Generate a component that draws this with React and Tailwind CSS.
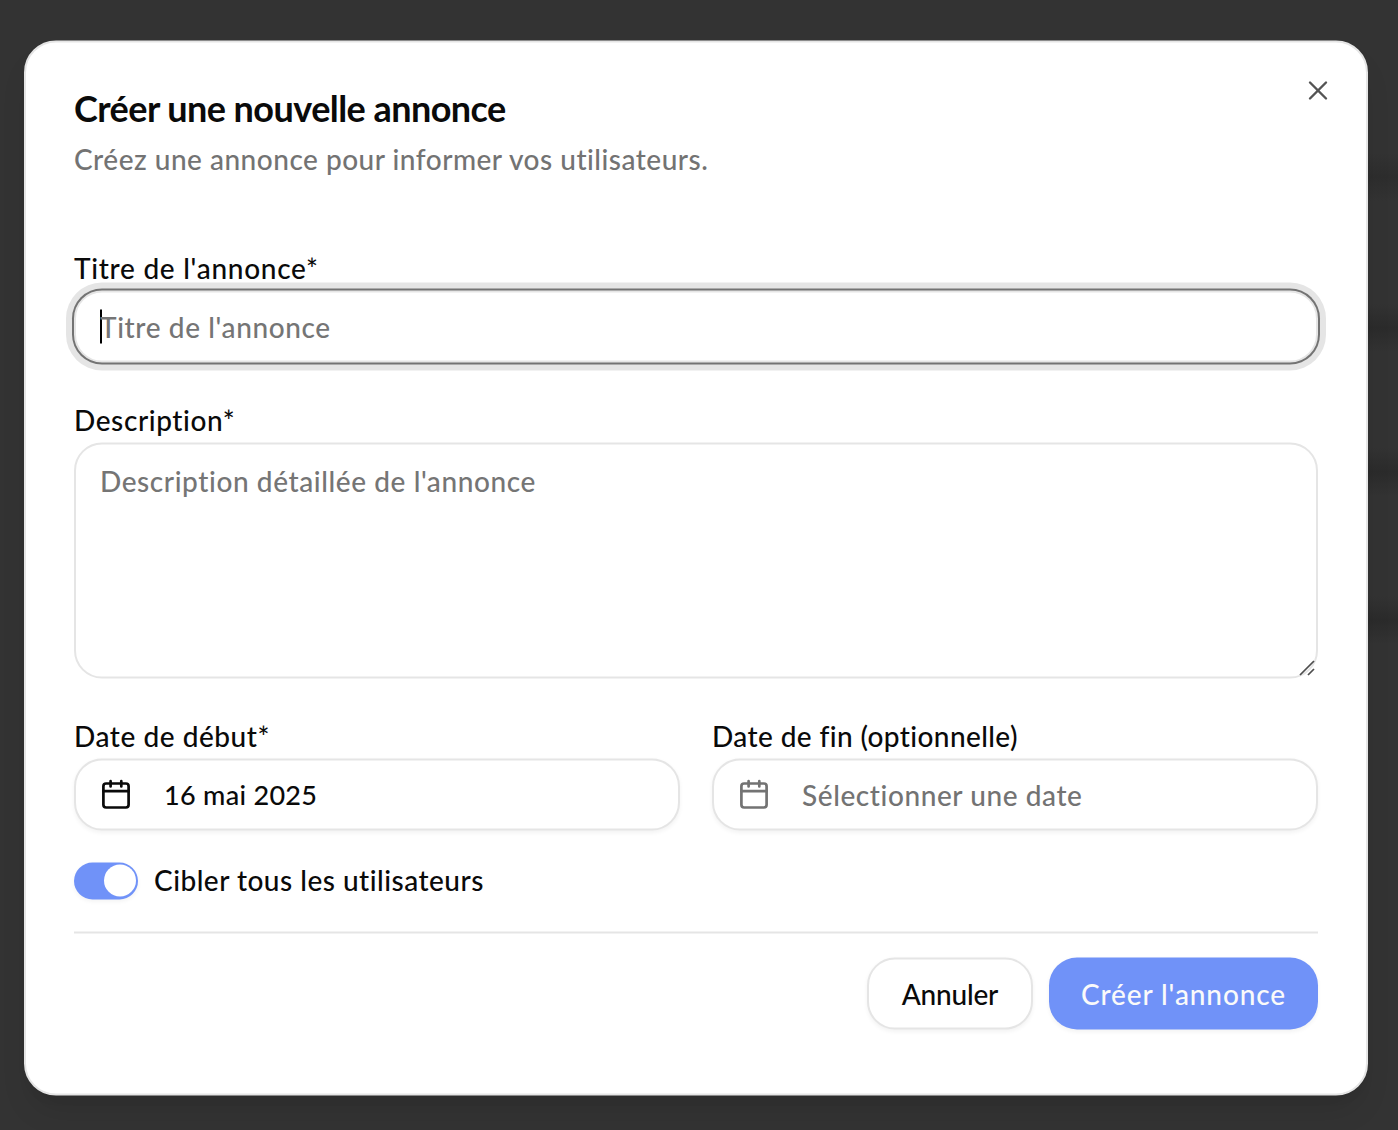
import { X } from "lucide-react";

function CalendarIcon({ className = "" }) {
  return (
    <svg
      viewBox="0 0 32 32"
      className={`size-8 shrink-0 ${className}`}
      fill="none"
      stroke="currentColor"
      strokeWidth="2.7"
      strokeLinecap="round"
      strokeLinejoin="round"
    >
      <rect x="3.4" y="5" width="25.2" height="24" rx="2.7" />
      <path d="M3.4 12.6h25.2M10.6 2.7v5.2M21.3 2.7v5.2" />
    </svg>
  );
}

function Label({ children, className }) {
  return <label className={`block h-7 whitespace-nowrap leading-[26px] ${className}`}>{children}</label>;
}

function DateButton({ children, className = "" }) {
  return (
    <button
      type="button"
      className={`mt-2 flex h-[72px] w-full items-center whitespace-nowrap rounded-[28px] border-2 border-[#e5e5e5] bg-white pl-6 text-left shadow-[0_2px_4px_rgba(0,0,0,0.05)] ${className}`}
    >
      {children}
    </button>
  );
}

function Backdrop() {
  return (
    <div className="absolute inset-y-0 right-0 w-[30px] overflow-hidden">
      <div className="mt-[153px] h-12 bg-[linear-gradient(#333333,#2d2d2d,#333333)]" />
      <div className="mt-[103px] h-12 bg-[linear-gradient(#333333,#2b2b2b,#333333)]" />
      <div className="mt-[96px] h-12 bg-[linear-gradient(#333333,#2b2b2b,#333333)]" />
      <div className="mt-[100px] h-12 bg-[linear-gradient(#333333,#2b2b2b,#333333)]" />
    </div>
  );
}

export default function App() {
  return (
    <main className="relative h-[1130px] w-[1398px] overflow-hidden bg-[#333333] pl-6 pt-10 font-['Lato','Liberation_Sans',sans-serif] text-[28px] font-medium text-[#0a0a0a]">
      <Backdrop />
      <section
        role="dialog"
        className="relative h-[1055px] w-[1344px] translate-y-[0.5px] rounded-[32px] border-2 border-[#e5e5e5] bg-white p-12 shadow-[0_20px_30px_-6px_rgba(0,0,0,0.1),0_8px_12px_-8px_rgba(0,0,0,0.1)]"
      >
        <button type="button" aria-label="Fermer" className="absolute right-8 top-8 text-[#545454]">
          <X className="size-8" strokeWidth={1.8} />
        </button>

        <header>
          <h2 className="h-9 whitespace-nowrap text-[36px] font-bold leading-[34px] tracking-[-0.55px]">
            Créer une nouvelle annonce
          </h2>
          <p className="mt-3 h-10 whitespace-nowrap leading-10 tracking-[0.5px] text-[#737373]">
            Créez une annonce pour informer vos utilisateurs.
          </p>
        </header>

        <form className="mt-[76px]">
          <div>
            <Label className="tracking-[0.72px]">Titre de l'annonce*</Label>
            <div className="mt-2 flex h-[72px] items-center rounded-[28px] border-2 border-[#e5e5e5] bg-white px-6 text-[#757575] shadow-[0_0_0_2px_#737373,0_0_0_8px_#e5e5e5]">
              <span className="-mr-0.5 h-[34px] w-0.5 bg-black" />
              <span className="whitespace-nowrap tracking-[0.62px]">Titre de l'annonce</span>
            </div>
          </div>

          <div className="mt-11">
            <Label className="tracking-[0.6px]">Description*</Label>
            <div className="relative mt-2 h-[236px] rounded-[28px] border-2 border-[#e5e5e5] px-6 py-4 leading-10 tracking-[0.59px] text-[#757575]">
              Description détaillée de l'annonce
              <svg
                viewBox="0 0 18 18"
                className="absolute bottom-0 right-0 size-[18px] text-[#4d4d4d]"
                fill="none"
                stroke="currentColor"
                strokeWidth="1.7"
              >
                <path d="M2 16.5L16 2.5" />
                <path d="M10 16.5l6-6" />
              </svg>
            </div>
          </div>

          <div className="mt-11 grid grid-cols-2 gap-8">
            <div>
              <Label className="tracking-[0.54px]">Date de début*</Label>
              <DateButton>
                <CalendarIcon />
                <span className="ml-8 text-[27px] tracking-[0.3px]">16 mai 2025</span>
              </DateButton>
            </div>
            <div>
              <Label className="tracking-[0.39px]">Date de fin (optionnelle)</Label>
              <DateButton className="text-[#737373]">
                <CalendarIcon />
                <span className="ml-8 tracking-[0.58px]">Sélectionner une date</span>
              </DateButton>
            </div>
          </div>

          <div className="mt-8 flex h-[37px] items-center">
            <span
              role="switch"
              aria-checked="true"
              className="flex h-[37px] w-16 items-start justify-end rounded-full bg-[#7092f8] pr-0.5 pt-0.5 shadow-[0_2px_4px_rgba(0,0,0,0.05)]"
            >
              <span className="size-8 rounded-full bg-white" />
            </span>
            <span className="ml-4 h-[37px] whitespace-nowrap leading-[35px] tracking-[0.49px]">
              Cibler tous les utilisateurs
            </span>
          </div>

          <footer className="mt-8 flex justify-end gap-4 border-t-2 border-[#e5e5e5] pt-6">
            <button
              type="button"
              className="h-[72px] w-[166px] whitespace-nowrap rounded-[28px] border-2 border-[#e5e5e5] bg-white tracking-[-0.2px] shadow-[0_2px_4px_rgba(0,0,0,0.05)]"
            >
              Annuler
            </button>
            <button
              type="button"
              className="h-[72px] w-[269px] whitespace-nowrap rounded-[28px] bg-[#7092f8] tracking-[0.9px] text-[#fafafa] shadow-[0_2px_4px_rgba(0,0,0,0.05)]"
            >
              Créer l'annonce
            </button>
          </footer>
        </form>
      </section>
    </main>
  );
}
